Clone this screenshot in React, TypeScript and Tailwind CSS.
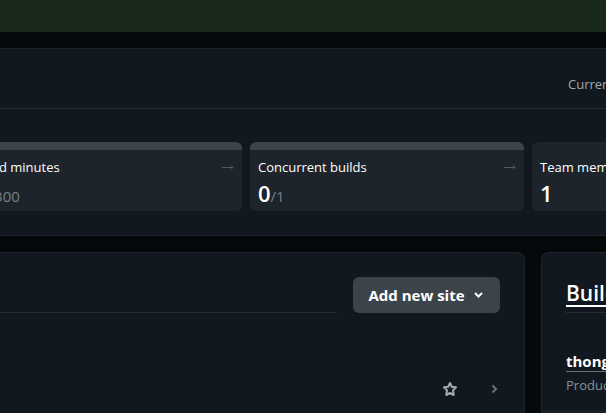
import React from 'react';

type Stat = { label: string; value: string; limit?: string; metered: boolean };

const stats: Stat[] = [
  { label: 'Build minutes', value: '0', limit: '/300', metered: true },
  { label: 'Concurrent builds', value: '0', limit: '/1', metered: true },
  { label: 'Team members', value: '1', metered: false },
];

function Arrow() {
  return (
    <svg width="12" height="8" viewBox="0 0 12 8" fill="none" stroke="#535a63" aria-hidden="true">
      <path d="M0 4.5h11M9 2.5l2 2-2 2" />
    </svg>
  );
}

function StatCard({ label, value, limit, metered }: Stat) {
  return (
    <a
      href="#usage"
      className={`flex h-[69px] w-[274px] shrink-0 flex-col overflow-hidden rounded-md border-t-8 bg-[#1e242b] px-2 ${
        metered ? 'border-[#3d434b]' : 'border-[#1e242b]'
      }`}
    >
      <span className="mt-[7px] flex items-center justify-between text-[13px]/5 text-white">
        {label}
        <Arrow />
      </span>
      <span className="flex h-8 items-baseline text-[22px]/8 font-semibold text-white">
        {value}
        {limit && <span className="text-[15px] font-medium text-[#778089]">{limit}</span>}
      </span>
    </a>
  );
}

export default function App() {
  return (
    <div className="h-screen overflow-hidden bg-[#05090c] font-['Open_Sans','Noto_Sans',sans-serif]">
      <div className="h-8 bg-[#18291b]" />
      <main className="mt-4 flex flex-col gap-4">
        <section className="border-y border-[#1e242c] bg-[#11181f] pb-6">
          <header className="flex h-[60px] items-center justify-end overflow-hidden border-b border-[#272d35] pt-3">
            <p className="w-[38px] text-[13px] whitespace-nowrap text-[#a3a9b0]">Current</p>
          </header>
          <div className="mt-[33px] -ml-8 flex gap-2 overflow-hidden">
            {stats.map((s) => (
              <StatCard key={s.label} {...s} />
            ))}
          </div>
        </section>
        <div className="flex gap-4">
          <section className="min-w-0 flex-1 rounded-tr-lg border-t border-r border-[#1e242c] bg-[#11181f] pt-6 pr-6">
            <header className="flex items-end gap-4">
              <hr className="flex-1 border-[#272d35]" />
              <button className="flex h-9 w-[147px] items-center justify-center gap-2 rounded-md bg-[#3d434b] text-[15px] font-bold whitespace-nowrap text-white">
                Add new site
                <svg width="12" height="12" viewBox="0 0 12 12" fill="none" stroke="currentColor" strokeWidth="2" aria-hidden="true">
                  <path d="M2 4l3.5 3.5L9 4" />
                </svg>
              </button>
            </header>
            <div className="flex h-[100px] items-center justify-end gap-[30px] pt-[52px]">
              <button aria-label="Favorite site">
                <svg width="16" height="16" viewBox="0 0 16 16" fill="none" stroke="#a3a9b0" strokeWidth="2" strokeLinejoin="round" aria-hidden="true">
                  <path d="M8 2l1.8 3.7 4.2.6-3 2.9.7 4.8L8 12l-3.7 2 .7-4.8-3-2.9 4.2-.6z" />
                </svg>
              </button>
              <svg width="12" height="12" viewBox="0 0 12 12" fill="none" stroke="#6b7178" strokeWidth="2" aria-hidden="true">
                <path d="M4.5 2.5L8 6 4.5 9.5" />
              </svg>
            </div>
          </section>
          <section className="w-[65px] shrink-0 overflow-hidden rounded-tl-lg border-t border-l border-[#1e242c] bg-[#11181f] pt-6 whitespace-nowrap">
            <h2 className="ml-6 h-9 border-b border-[#272d35] text-[21px]/8 font-semibold text-white">
              <a href="#builds" className="underline decoration-2 underline-offset-4">Builds</a>
            </h2>
            <div className="mt-9 ml-6 h-[61px]">
              <a href="#thong" className="block text-[15px]/6 font-bold text-white underline decoration-[#6b7178] decoration-1 underline-offset-4">thong</a>
              <p className="text-[13px]/6 text-[#8b9199]">Production</p>
            </div>
            <div className="h-4 bg-[#1a2027]" />
          </section>
        </div>
      </main>
    </div>
  );
}
